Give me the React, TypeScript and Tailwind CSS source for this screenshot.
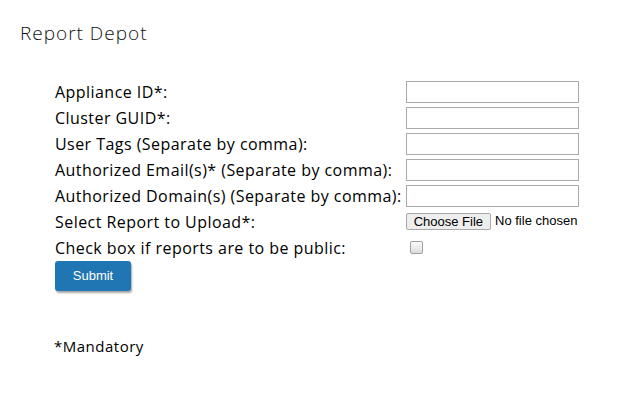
const fields = [
  "Appliance ID*:",
  "Cluster GUID*:",
  "User Tags (Separate by comma):",
  "Authorized Email(s)* (Separate by comma):",
  "Authorized Domain(s) (Separate by comma):",
]

export default function App() {
  return (
    <div className="min-h-[393px] w-[621px] bg-white font-['Open_Sans',sans-serif] text-black">
      <h1 className="pl-5 pt-[21px] text-[19px] font-light leading-[24px] tracking-[1px] text-[#111]">
        Report Depot
      </h1>

      <div className="mt-[34px] pl-[55px]">
        <div className="grid grid-cols-[max-content_max-content] items-center justify-start gap-x-[4px]">
          {fields.map((label) => (
            <div key={label} className="contents">
              <label className="text-[16px] leading-[26px] tracking-[0.45px]">
                {label}
              </label>
              <input
                type="text"
                className="h-[22px] w-[173px] border border-[#a9a9a9] bg-white px-1 text-[13px] outline-none"
              />
            </div>
          ))}

          <label className="text-[16px] leading-[26px] tracking-[0.45px]">
            Select Report to Upload*:
          </label>
          <div className="flex items-center gap-[4px] pb-[2px] font-['Liberation_Sans',Arial,sans-serif] text-[13px]">
            <button className="h-[17px] rounded-[2px] border border-[#a9a9a9] bg-[#eeeeee] px-[7px] leading-[15px] text-black">
              Choose File
            </button>
            <span>No file chosen</span>
          </div>

          <label className="text-[16px] leading-[26px] tracking-[0.45px]">
            Check box if reports are to be public:
          </label>
          <div className="flex items-center pl-[4px] pb-[2px]">
            <span className="block h-[13px] w-[13px] rounded-[2px] border border-[#a0a0a0] bg-gradient-to-b from-[#fcfcfc] to-[#dcdcdc]" />
          </div>
        </div>

        <button className="h-[30px] w-[76px] rounded-[3px] bg-[#1f76b2] font-['Liberation_Sans',Arial,sans-serif] text-[13px] text-white shadow-[1px_2px_2px_rgba(0,0,0,0.35)]">
          Submit
        </button>

        <p className="mt-[45px] -ml-px text-[15px] leading-[20px] tracking-[0.5px]">
          *Mandatory
        </p>
      </div>
    </div>
  )
}
